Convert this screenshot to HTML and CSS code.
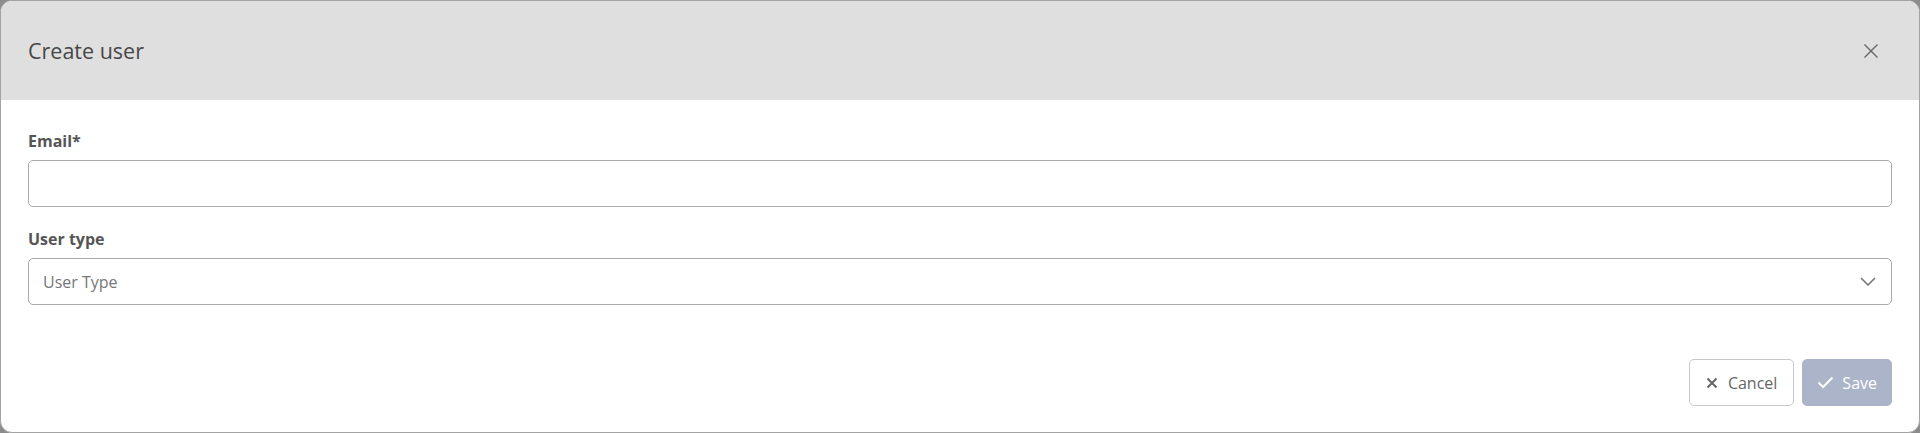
FILE: index.html
```html
<!DOCTYPE html>
<html lang="en">
<head>
<meta charset="utf-8">
<title>Create user</title>
<link rel="stylesheet" href="styles.css">
</head>
<body>
<div class="dialog">
  <div class="dialog-header">
    <h1 class="dialog-title">Create user</h1>
    <button class="close-btn" aria-label="Close">
      <svg width="16" height="16" viewBox="0 0 16 16"><path d="M1.5 1.5 L14.5 14.5 M14.5 1.5 L1.5 14.5" stroke="#666" stroke-width="1.4" fill="none"/></svg>
    </button>
  </div>
  <div class="dialog-body">
    <div class="field">
      <label class="field-label">Email*</label>
      <input class="text-input" type="text">
    </div>
    <div class="field">
      <label class="field-label">User type</label>
      <div class="select">
        <span class="select-placeholder">User Type</span>
        <svg class="chevron" width="16" height="9" viewBox="0 0 16 9"><path d="M1 1 L8 8 L15 1" stroke="#777" stroke-width="1.6" fill="none"/></svg>
      </div>
    </div>
  </div>
  <div class="dialog-footer">
    <button class="btn btn-cancel">
      <svg width="12" height="12" viewBox="0 0 12 12"><path d="M1.5 1.5 L10.5 10.5 M10.5 1.5 L1.5 10.5" stroke="#666" stroke-width="2" fill="none"/></svg>
      <span>Cancel</span>
    </button>
    <button class="btn btn-save">
      <svg width="17" height="13" viewBox="0 0 17 13"><path d="M1.5 6.5 L6 11 L15.5 1.5" stroke="#fff" stroke-width="2" fill="none"/></svg>
      <span>Save</span>
    </button>
  </div>
</div>
</body>
</html>
```
FILE: styles.css
```css
* { box-sizing: border-box; }
html, body {
  margin: 0;
  padding: 0;
  width: 1920px;
  height: 433px;
  background: #8c8c8c;
  overflow: hidden;
}
body {
  font-family: "Open Sans", "Noto Sans", sans-serif;
  color: #555;
}
.dialog {
  width: 1920px;
  height: 433px;
  border: 1px solid #a3a3a3;
  border-radius: 12px;
  background: #fff;
  overflow: hidden;
  display: flex;
  flex-direction: column;
}
.dialog-header {
  height: 99px;
  background: #dfdfdf;
  display: flex;
  align-items: center;
  justify-content: space-between;
  padding: 0 40px 0 27px;
}
.dialog-title {
  margin: 0;
  font-size: 21.5px;
  font-weight: 400;
  color: #474747;
  line-height: 28px;
  padding-top: 1px;
}
.close-btn {
  background: none;
  border: none;
  padding: 0;
  width: 16px;
  height: 16px;
  display: flex;
  cursor: pointer;
}
.dialog-body {
  padding: 30px 27px 0 27px;
  display: flex;
  flex-direction: column;
  gap: 21px;
}
.field {
  display: flex;
  flex-direction: column;
  gap: 7px;
}
.field-label {
  font-size: 16px;
  font-weight: 700;
  line-height: 23px;
  color: #555;
}
.text-input {
  height: 47px;
  width: 100%;
  border: 1px solid #a9a9a9;
  border-radius: 5px;
  font-family: inherit;
  font-size: 16px;
  padding: 0 11px;
  outline: none;
  background: #fff;
}
.select {
  height: 47px;
  border: 1px solid #a9a9a9;
  border-radius: 5px;
  display: flex;
  align-items: center;
  justify-content: space-between;
  padding: 0 15px 0 14px;
}
.select-placeholder {
  font-size: 16px;
  color: #777;
  line-height: 22px;
}
.chevron { display: block; }
.dialog-footer {
  margin-top: auto;
  padding: 0 27px 26px 0;
  display: flex;
  justify-content: flex-end;
  gap: 8px;
}
.btn {
  height: 47px;
  border-radius: 5px;
  font-family: inherit;
  font-size: 16px;
  display: flex;
  align-items: center;
  gap: 10px;
  cursor: pointer;
}
.btn-cancel {
  background: #fff;
  border: 1px solid #c9c9c9;
  color: #666;
  padding: 0 16px 0 16px;
}
.btn-save {
  background: #acb4c9;
  border: 1px solid #acb4c9;
  color: #fff;
  gap: 8px;
  padding: 0 14px;
}
```
